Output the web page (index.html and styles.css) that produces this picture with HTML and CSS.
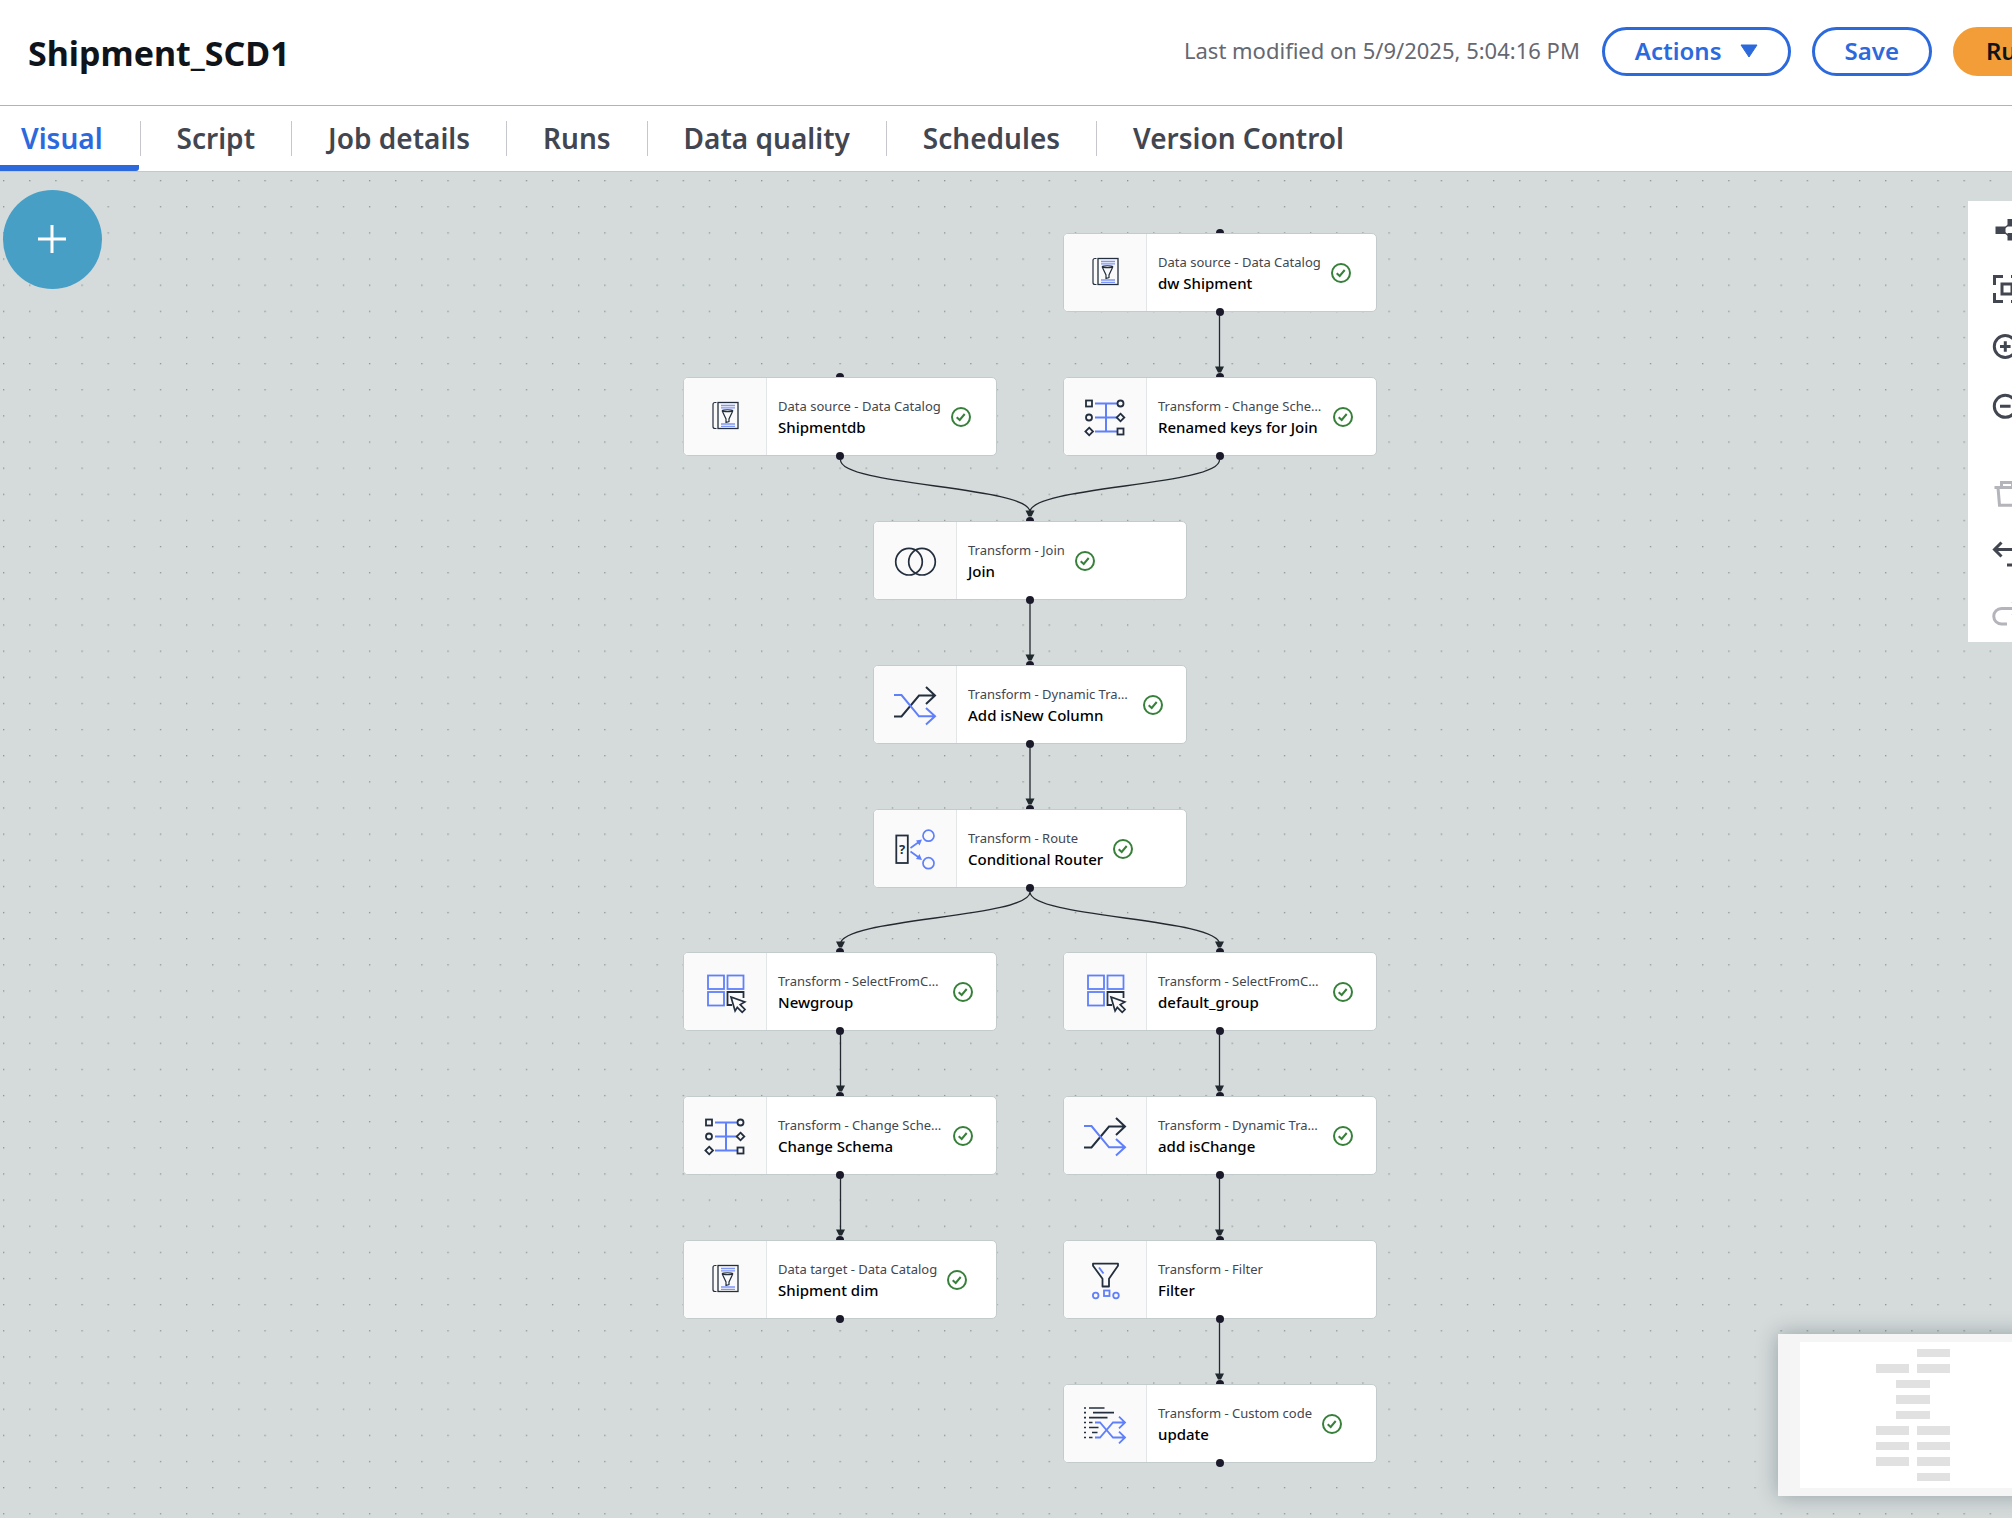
FILE: index.html
```html
<!DOCTYPE html>
<html lang="en">
<head>
<meta charset="utf-8">
<title>Shipment_SCD1</title>
<link rel="stylesheet" href="styles.css">
</head>
<body>

<svg class="sprite" aria-hidden="true">
  <symbol id="i-catalog" viewBox="0 0 48 48">
    <g fill="none" stroke="#232f3e">
      <rect x="17" y="10.500" width="20" height="26" stroke-width="1.300"/>
      <path d="M15.500 10.500h-1.500q-2 0-2 2v22q0 2 2 2h1.500" stroke-width="1.200"/>
      <path d="M21 18.500c1.500-1 9.500-1 11 0M21 18.500c1.500 1.500 9.500 1.500 11 0M21 18.500l4 8.500v3.500l3-1v-2.500l4-8.500" stroke-width="1.200"/>
    </g>
    <path d="M20 13.500h14M20 15.800h14M20 32h14M20 34.300h14" fill="none" stroke="#7f97f8" stroke-width="1.300"/>
  </symbol>
  <symbol id="i-schema" viewBox="0 0 48 48">
    <path d="M14 11.500h22M14 25.500h22M14 39.500h22M25 11.500v28" fill="none" stroke="#5f7ffb" stroke-width="2"/>
    <g fill="#fafafa" stroke="#232f3e" stroke-width="1.800">
      <rect x="5" y="8.500" width="6" height="6"/>
      <circle cx="39.500" cy="11.500" r="3"/>
      <circle cx="8" cy="25.500" r="3"/>
      <path d="M39.500 21.700l3.800 3.800-3.800 3.800-3.800-3.800z"/>
      <path d="M8.200 35.700l3.800 3.800-3.800 3.800-3.800-3.800z"/>
      <rect x="36.500" y="36.500" width="6" height="6"/>
    </g>
  </symbol>
  <symbol id="i-join" viewBox="0 0 48 48">
    <g fill="none" stroke="#232f3e" stroke-width="1.700">
      <circle cx="18" cy="25.700" r="13.300"/><circle cx="31" cy="25.700" r="13.300"/>
    </g>
  </symbol>
  <symbol id="i-shuffle" viewBox="0 0 48 48">
    <g fill="none" stroke-width="2">
      <path d="M3 36.500h7.500L28 15.500h16M35 7l9 8.500-9 8.500" stroke="#232f3e"/>
      <path d="M3 15h7.500L28 36.300h16M35 28l9 8.300-9 8.300" stroke="#5f7ffb"/>
    </g>
  </symbol>
  <symbol id="i-select" viewBox="0 0 48 48">
    <g fill="none" stroke="#5f7ffb" stroke-width="1.800">
      <rect x="7" y="8.500" width="16" height="13.500"/><rect x="26.500" y="8.500" width="16" height="13.500"/><rect x="7" y="25" width="16" height="13.500"/>
    </g>
    <path d="M31 38h-4.500v-13h16v6" fill="none" stroke="#232f3e" stroke-width="1.800"/>
    <path d="M30 30l13.800 5-4.600 2.600 4.800 4.900-2.800 2.800-4.900-4.900-2.200 3.600z" fill="#fafafa" stroke="#232f3e" stroke-width="1.700"/>
  </symbol>
  <symbol id="i-filter" viewBox="0 0 48 48">
    <path d="M12 8.700h25v2l-9 13v7.800h-6.500v-7.800l-9.500-13z" fill="none" stroke="#232f3e" stroke-width="1.800" stroke-linejoin="round"/>
    <g fill="none" stroke="#5f7ffb" stroke-width="1.800">
      <path d="M18 12.500l4.500 6"/>
      <circle cx="14.700" cy="40.500" r="2.800"/><rect x="23" y="35.500" width="5.500" height="5.500"/><circle cx="35" cy="40.500" r="2.800"/>
    </g>
  </symbol>
  <symbol id="i-code" viewBox="0 0 48 48">
    <path d="M3 9h2M8 9h15.500M3 13.700h2M12 13.700h21M3 18.700h2M8 18.700h18.500M3 23.500h2M8 23.500h3.500M3 28.500h2M8 28.500h9.500M3 33.500h2M11 33.500h5.500M3 38.500h2M8 38.500h3.500" fill="none" stroke="#232f3e" stroke-width="1.700"/>
    <path d="M14 23.500h5l13 15h12M14 38.500h5l13-15h12M38 17.700l6 5.800-6 5.800M38 32.700l6 5.800-6 5.800" fill="none" stroke="#5f7ffb" stroke-width="1.800"/>
  </symbol>
  <symbol id="i-ok" viewBox="0 0 20 20">
    <g fill="none" stroke="#37803a" stroke-width="2"><circle cx="10" cy="10" r="9"/><path d="M5.700 10.200l3 2.800 5-6"/></g>
  </symbol>
</svg>

<header class="header">
  <h1 class="title">Shipment_SCD1</h1>
  <div class="header-actions">
    <span class="modified">Last modified on 5/9/2025, 5:04:16 PM</span>
    <div class="buttons">
      <button type="button" class="btn">Actions
        <svg class="caret" viewBox="0 0 18 14"><path d="M1 1h16l-8 12z" fill="currentColor" stroke="currentColor" stroke-linejoin="round"/></svg>
      </button>
      <button type="button" class="btn">Save</button>
      <button type="button" class="btn btn-primary">Run</button>
    </div>
  </div>
</header>

<nav class="tabs">
  <a href="#visual" class="tab active" aria-current="page">Visual</a>
  <a href="#script" class="tab">Script</a>
  <a href="#details" class="tab">Job details</a>
  <a href="#runs" class="tab">Runs</a>
  <a href="#quality" class="tab">Data quality</a>
  <a href="#schedules" class="tab">Schedules</a>
  <a href="#version" class="tab">Version Control</a>
</nav>

<main class="canvas" id="visual">
  <svg class="edges" aria-hidden="true">
    <defs>
      <pattern id="dots" width="20" height="20" patternUnits="userSpaceOnUse" patternTransform="translate(3 8) scale(1.307)">
        <rect x="0" y="0" width="1" height="1" fill="#8b9292"/>
      </pattern>
    </defs>
    <rect width="100%" height="100%" fill="url(#dots)"/>
    <g fill="none" stroke="#232a2f" stroke-width="1.300">
      <path d="M1219.500 144v52"/>
      <path d="M840.500 288c0 26 189.500 26 189.500 52M1219.500 288c0 26-189.500 26-189.500 52"/>
      <path d="M1030 432v52M1030 576v52"/>
      <path d="M1030 720c0 26-189.500 26-189.500 52M1030 720c0 26 189.500 26 189.500 52"/>
      <path d="M840.500 863v52M840.500 1007v52M1219.500 863v52M1219.500 1007v52M1219.500 1151v52"/>
    </g>
    <g fill="#232a2f">
      <path id="head" d="M1215 194.500h9l-3 6h-3z"/>
      <use href="#head" x="-189.500" y="144"/>
      <use href="#head" x="-189.500" y="288"/>
      <use href="#head" x="-189.500" y="432"/>
      <use href="#head" x="-379" y="575"/>
      <use href="#head" y="575"/>
      <use href="#head" x="-379" y="719"/>
      <use href="#head" y="719"/>
      <use href="#head" x="-379" y="863"/>
      <use href="#head" y="863"/>
      <use href="#head" y="1007"/>
    </g>
  </svg>

  <article class="node right r1">
    <div class="node-icon"><svg><use href="#i-catalog"/></svg></div>
    <div class="node-text"><p class="kind">Data source - Data Catalog</p><p class="name">dw Shipment</p></div>
    <svg class="ok"><use href="#i-ok"/></svg>
  </article>
  <article class="node left r2">
    <div class="node-icon"><svg><use href="#i-catalog"/></svg></div>
    <div class="node-text"><p class="kind">Data source - Data Catalog</p><p class="name">Shipmentdb</p></div>
    <svg class="ok"><use href="#i-ok"/></svg>
  </article>
  <article class="node right r2">
    <div class="node-icon"><svg><use href="#i-schema"/></svg></div>
    <div class="node-text long"><p class="kind">Transform - Change Sche…</p><p class="name">Renamed keys for Join</p></div>
    <svg class="ok"><use href="#i-ok"/></svg>
  </article>
  <article class="node middle r3">
    <div class="node-icon"><svg><use href="#i-join"/></svg></div>
    <div class="node-text"><p class="kind">Transform - Join</p><p class="name">Join</p></div>
    <svg class="ok"><use href="#i-ok"/></svg>
  </article>
  <article class="node middle r4">
    <div class="node-icon"><svg><use href="#i-shuffle"/></svg></div>
    <div class="node-text long"><p class="kind">Transform - Dynamic Tra…</p><p class="name">Add isNew Column</p></div>
    <svg class="ok"><use href="#i-ok"/></svg>
  </article>
  <article class="node middle r5">
    <div class="node-icon">
      <svg viewBox="0 0 48 48">
        <rect x="5.300" y="11.500" width="11.500" height="27.500" fill="none" stroke="#232f3e" stroke-width="1.800"/>
        <text x="11" y="30" class="glyph">?</text>
        <g fill="none" stroke="#5f7ffb" stroke-width="1.700">
          <circle cx="37.500" cy="11.700" r="5.500"/><circle cx="37.500" cy="39.200" r="5.500"/>
          <path d="M19.500 24l8-5.700M19.500 27.500l8 5.800"/>
        </g>
        <path d="M31 15.500l-6 1 3.500 5zM31 36l-6-1 3.500-5z" fill="#5f7ffb"/>
      </svg>
    </div>
    <div class="node-text"><p class="kind">Transform - Route</p><p class="name">Conditional Router</p></div>
    <svg class="ok"><use href="#i-ok"/></svg>
  </article>
  <article class="node left r6">
    <div class="node-icon"><svg><use href="#i-select"/></svg></div>
    <div class="node-text long"><p class="kind">Transform - SelectFromC…</p><p class="name">Newgroup</p></div>
    <svg class="ok"><use href="#i-ok"/></svg>
  </article>
  <article class="node right r6">
    <div class="node-icon"><svg><use href="#i-select"/></svg></div>
    <div class="node-text long"><p class="kind">Transform - SelectFromC…</p><p class="name">default_group</p></div>
    <svg class="ok"><use href="#i-ok"/></svg>
  </article>
  <article class="node left r7">
    <div class="node-icon"><svg><use href="#i-schema"/></svg></div>
    <div class="node-text long"><p class="kind">Transform - Change Sche…</p><p class="name">Change Schema</p></div>
    <svg class="ok"><use href="#i-ok"/></svg>
  </article>
  <article class="node right r7">
    <div class="node-icon"><svg><use href="#i-shuffle"/></svg></div>
    <div class="node-text long"><p class="kind">Transform - Dynamic Tra…</p><p class="name">add isChange</p></div>
    <svg class="ok"><use href="#i-ok"/></svg>
  </article>
  <article class="node left r8">
    <div class="node-icon"><svg><use href="#i-catalog"/></svg></div>
    <div class="node-text"><p class="kind">Data target - Data Catalog</p><p class="name">Shipment dim</p></div>
    <svg class="ok"><use href="#i-ok"/></svg>
  </article>
  <article class="node right r8">
    <div class="node-icon"><svg><use href="#i-filter"/></svg></div>
    <div class="node-text"><p class="kind">Transform - Filter</p><p class="name">Filter</p></div>
  </article>
  <article class="node right r9">
    <div class="node-icon"><svg><use href="#i-code"/></svg></div>
    <div class="node-text"><p class="kind">Transform - Custom code</p><p class="name">update</p></div>
    <svg class="ok"><use href="#i-ok"/></svg>
  </article>

  <button type="button" class="add" aria-label="Add node">
    <svg viewBox="0 0 28 28"><path d="M14 0v28M0 14h28" stroke="#fff" stroke-width="3"/></svg>
  </button>

  <div class="toolbar" role="toolbar" aria-label="Canvas tools">
    <button type="button" class="tool" aria-label="Arrange">
      <svg viewBox="0 0 32 32"><path d="M4.500 12.500h10v7.500h-10zM16.500 5h10v7.500h-10zM16.500 19h10v7.500h-10z" fill="currentColor"/><path d="M13 14.500l5-4M13 18l5 4" fill="none" stroke="currentColor" stroke-width="1.500"/></svg>
    </button>
    <button type="button" class="tool" aria-label="Fit to screen">
      <svg viewBox="0 0 32 32"><path d="M12 3.500H3.500V12M20 3.500h8.500V12M3.500 20v8.500H12M28.500 20v8.500H20M11 11h10v10H11z" fill="none" stroke="currentColor" stroke-width="3"/></svg>
    </button>
    <button type="button" class="tool" aria-label="Zoom in">
      <svg viewBox="0 0 32 32"><circle cx="14.300" cy="14.500" r="11" fill="none" stroke="currentColor" stroke-width="3"/><path d="M14.300 9.300v10.400M9 14.500h10.600M22 22l8 8" fill="none" stroke="currentColor" stroke-width="3"/></svg>
    </button>
    <button type="button" class="tool" aria-label="Zoom out">
      <svg viewBox="0 0 32 32"><circle cx="14.300" cy="15.300" r="11" fill="none" stroke="currentColor" stroke-width="3"/><path d="M9 15.300h10.600M22 23l8 8" fill="none" stroke="currentColor" stroke-width="3"/></svg>
    </button>
    <button type="button" class="tool tool-break" disabled aria-label="Remove">
      <svg viewBox="0 0 32 32"><path d="M3.500 9.500h25M10.500 9V4.500h11V9M7 9.500l1.500 17.800h15L25 9.500" fill="none" stroke="currentColor" stroke-width="3"/></svg>
    </button>
    <button type="button" class="tool" aria-label="Undo">
      <svg viewBox="0 0 32 32"><path d="M3 12.500h20a7.500 7.500 0 010 15.500h-7M10.500 5.500l-7 7 7 7" fill="none" stroke="currentColor" stroke-width="3"/></svg>
    </button>
    <button type="button" class="tool" disabled aria-label="Redo">
      <svg viewBox="0 0 32 32"><path d="M29 12.500H10.500a7.700 7.700 0 000 15.500H16M21.500 5.500l7 7-7 7" fill="none" stroke="currentColor" stroke-width="3"/></svg>
    </button>
  </div>

  <div class="minimap" aria-label="Minimap">
    <svg viewBox="0 0 256 146">
      <rect width="256" height="146" fill="#fff"/>
      <g fill="#e1e1e1">
        <rect x="117" y="7" width="33" height="8"/>
        <rect x="76" y="22" width="33" height="9"/><rect x="117" y="22" width="33" height="9"/>
        <rect x="96" y="38" width="34" height="8"/>
        <rect x="96" y="53" width="34" height="9"/>
        <rect x="96" y="69" width="34" height="8"/>
        <rect x="76" y="84" width="33" height="9"/><rect x="117" y="84" width="33" height="9"/>
        <rect x="76" y="100" width="33" height="8"/><rect x="117" y="100" width="33" height="8"/>
        <rect x="76" y="115" width="33" height="9"/><rect x="117" y="115" width="33" height="9"/>
        <rect x="117" y="131" width="33" height="8"/>
      </g>
    </svg>
  </div>
</main>
</body>
</html>
```
FILE: styles.css
```css
* {
  box-sizing: border-box;
}

body {
  margin: 0;
  min-height: 100vh;
  display: flex;
  flex-direction: column;
  overflow-x: hidden;
  background: #fff;
  color: #0f141a;
  font-family: "Noto Sans", "Open Sans", sans-serif;
}

button {
  font-family: inherit;
  cursor: pointer;
}

svg {
  display: block;
}

.sprite {
  position: absolute;
  width: 0;
  height: 0;
}

/* Header */
.header {
  display: flex;
  align-items: center;
  justify-content: space-between;
  min-height: 106px;
  padding-left: 28px;
  overflow: hidden;
  border-bottom: 1px solid #aab7b8;
}

.title {
  margin: 0;
  font-size: 34px;
  line-height: 48px;
  font-weight: 700;
}

.header-actions {
  display: flex;
  align-items: center;
  gap: 22px;
  margin-right: -53px;
  padding-bottom: 2px;
}

.modified {
  padding-bottom: 4px;
  color: #656871;
  font-size: 22px;
  line-height: 30px;
  white-space: nowrap;
}

.buttons {
  display: flex;
  gap: 21px;
}

.btn {
  display: flex;
  align-items: center;
  gap: 18px;
  height: 49px;
  padding: 0 30px 2px;
  border: 3px solid #2c69dc;
  border-radius: 25px;
  background: #fff;
  color: #2c69dc;
  font-size: 24px;
  line-height: 32px;
  font-weight: 600;
}

.btn-primary {
  border-color: #f29d38;
  background: #f29d38;
  color: #0f141a;
}

.caret {
  width: 18px;
  height: 14px;
}

/* Tabs */
.tabs {
  display: flex;
  border-bottom: 1px solid #c6c6cd;
}

.tab {
  display: flex;
  padding: 15px 0;
  color: #424650;
  font-size: 28px;
  line-height: 35px;
  font-weight: 600;
  text-decoration: none;
  white-space: nowrap;
}

.tab::before {
  content: "";
  width: 1px;
  margin-right: 36px;
  background: #c6c6cd;
}

.tab::after {
  content: "";
  width: 36px;
}

.tab:first-child::before {
  width: 0;
  margin-right: 21px;
}

.tab.active {
  margin-right: 1px;
  padding-bottom: 9px;
  border-bottom: 6px solid #2c69dc;
  border-bottom-right-radius: 3px;
  color: #2c69dc;
}

/* Canvas */
.canvas {
  position: relative;
  flex: 1;
  min-height: 1340px;
  overflow: hidden;
  background: #d5dbdb;
}

.edges {
  position: absolute;
  inset: 0;
  width: 100%;
  height: 100%;
}

.node {
  position: absolute;
  display: flex;
  align-items: center;
  width: 314px;
  height: 79px;
  border: 1px solid #c3cbcc;
  border-radius: 5px;
  background: #fff;
}

.node::before {
  content: "";
  position: absolute;
  top: -5px;
  left: 152px;
  width: 8px;
  height: 4px;
  border-radius: 4px 4px 0 0;
  background: #1b1a2b;
}

.node::after {
  content: "";
  position: absolute;
  bottom: -5px;
  left: 152px;
  width: 8px;
  height: 8px;
  border-radius: 50%;
  background: #1b1a2b;
}

.left { left: 683px; }
.middle { left: 873px; }
.right { left: 1063px; }

.r1 { top: 61px; }
.r2 { top: 205px; }
.r3 { top: 349px; }
.r4 { top: 493px; }
.r5 { top: 637px; }
.r6 { top: 780px; }
.r7 { top: 924px; }
.r8 { top: 1068px; }
.r9 { top: 1212px; }

.node-icon {
  display: grid;
  place-items: start center;
  align-self: stretch;
  width: 83px;
  padding-top: 14px;
  border-right: 1px solid #e3e6e6;
  border-radius: 4px 0 0 4px;
  background: #fafafa;
}

.node-icon svg {
  width: 48px;
  height: 48px;
}

.glyph {
  font: 700 13px "Noto Sans", sans-serif;
  text-anchor: middle;
  fill: #232f3e;
}

.node-text {
  margin-left: 11px;
  white-space: nowrap;
}

.long {
  width: 165px;
}

.kind {
  margin: 0;
  color: #424650;
  font-size: 13px;
  line-height: 20px;
}

.name {
  margin: 0;
  color: #000;
  font-size: 15px;
  line-height: 22px;
  font-weight: 500;
}

.ok {
  width: 20px;
  height: 20px;
  margin-left: 10px;
}

.add {
  position: absolute;
  top: 18px;
  left: 3px;
  display: grid;
  place-items: center;
  width: 99px;
  height: 99px;
  padding: 0 1px 1px 0;
  border: 0;
  border-radius: 50%;
  background: #489fc6;
}

.add svg {
  width: 28px;
  height: 28px;
}

.toolbar {
  position: absolute;
  top: 29px;
  right: -34px;
  display: flex;
  flex-direction: column;
  width: 78px;
  background: #fff;
}

.tool {
  display: grid;
  place-items: center;
  height: 59px;
  padding: 0 0 2px;
  border: 0;
  background: none;
  color: #424650;
}

.tool:disabled {
  color: #b4b4bb;
}

.tool svg {
  width: 32px;
  height: 32px;
}

.tool-break {
  margin-top: 28px;
}

.minimap {
  position: absolute;
  right: -66px;
  bottom: 22px;
  width: 300px;
  padding: 8px 22px;
  background: #f5f5f5;
  box-shadow: 0 0 20px rgba(0, 28, 36, 0.3);
}

.minimap svg {
  width: 256px;
  height: 146px;
}
```
